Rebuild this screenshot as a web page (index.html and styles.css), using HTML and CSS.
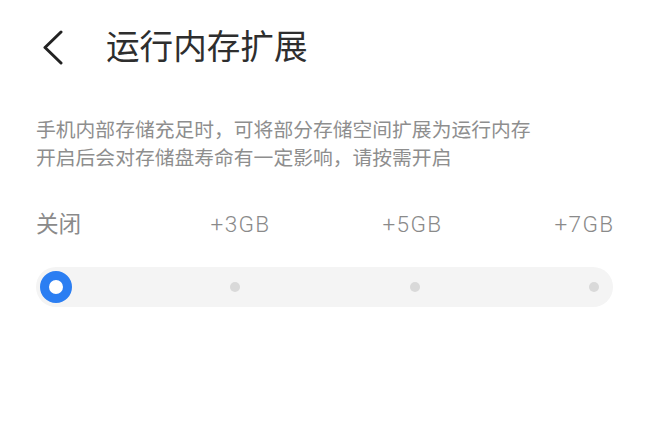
FILE: index.html
```html
<!DOCTYPE html>
<html lang="zh-CN">
<head>
  <meta charset="UTF-8">
  <meta name="viewport" content="width=device-width, initial-scale=1.0">
  <title>运行内存扩展</title>
  <link rel="stylesheet" href="styles.css">
</head>
<body>
  <div class="page">
    <div class="header">
      <svg class="back" width="22" height="36" viewBox="0 0 22 36">
        <path d="M19 2 L3 17.5 L19 33" fill="none" stroke="#222" stroke-width="3" stroke-linecap="round" stroke-linejoin="round"/>
      </svg>
      <h1 class="title">运行内存扩展</h1>
    </div>
    <p class="desc">手机内部存储充足时，可将部分存储空间扩展为运行内存<br>开启后会对存储盘寿命有一定影响，请按需开启</p>
    <div class="levels">
      <span class="level">关闭</span>
      <span class="level size level-3">+3GB</span>
      <span class="level size">+5GB</span>
      <span class="level size">+7GB</span>
    </div>
    <div class="track">
      <div class="stop"><span class="knob"></span></div>
      <div class="stop"><span class="dot"></span></div>
      <div class="stop"><span class="dot"></span></div>
      <div class="stop"><span class="dot"></span></div>
    </div>
  </div>
</body>
</html>
```

FILE: styles.css
```css
body {
  margin: 0;
  background: #fff;
  font-family: "Roboto", "Noto Sans CJK SC", sans-serif;
}
.page {
  padding: 0 37px 0 36px;
}
.header {
  display: flex;
  align-items: center;
  height: 95px;
}
.back {
  margin-left: 6px;
}
.title {
  margin: 0 0 0 42px;
  font-size: 33.6px;
  font-weight: 400;
  color: #2e2e2e;
  line-height: 48px;
}
.desc {
  margin: 22px 0 0;
  font-size: 19.8px;
  line-height: 28px;
  color: #8e8e8e;
}
.levels {
  display: flex;
  justify-content: space-between;
  margin-top: 37px;
  height: 30px;
  line-height: 30px;
  font-size: 22.6px;
  color: #8a8a8a;
}
.size {
  font-weight: 300;
  letter-spacing: 1.3px;
  margin-right: -1.3px;
}
.level-3 {
  margin-left: 16px;
}
.track {
  display: flex;
  justify-content: space-between;
  align-items: center;
  margin-top: 27px;
  height: 40px;
  padding: 0 3px 0 4px;
  border-radius: 20px;
  background: #f4f4f4;
}
.stop {
  display: flex;
  justify-content: center;
  align-items: center;
  width: 32px;
  height: 32px;
}
.knob {
  width: 14px;
  height: 14px;
  border: 9px solid #2b7ef2;
  border-radius: 50%;
  background: #fff;
}
.dot {
  width: 10px;
  height: 10px;
  border-radius: 50%;
  background: #d9d9d9;
}
```
